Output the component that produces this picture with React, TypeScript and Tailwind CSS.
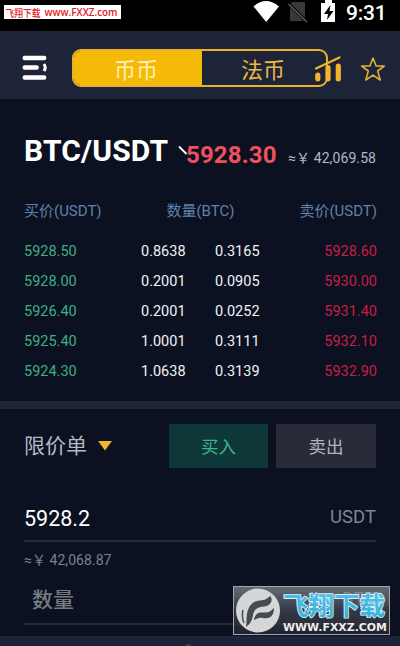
const bids = [
  { price: "5928.50", amount: "0.8638" },
  { price: "5928.00", amount: "0.2001" },
  { price: "5926.40", amount: "0.2001" },
  { price: "5925.40", amount: "1.0001" },
  { price: "5924.30", amount: "1.0638" },
];

const asks = [
  { price: "5928.60", amount: "0.3165" },
  { price: "5930.00", amount: "0.0905" },
  { price: "5931.40", amount: "0.0252" },
  { price: "5932.10", amount: "0.3111" },
  { price: "5932.90", amount: "0.3139" },
];

export default function App() {
  return (
    <div className="relative flex h-[646px] w-[400px] flex-col overflow-hidden bg-[#0b1120] font-['Roboto','Noto_Sans_CJK_SC',sans-serif] whitespace-nowrap text-white">
      <StatusBar />
      <Header />
      <Ticker />
      <OrderBook />
      <div className="h-2 shrink-0 bg-[#1f2636]" />
      <OrderForm />
      <div className="flex h-[10px] shrink-0 justify-center overflow-hidden bg-[#1d2338] pt-2">
        <div className="-ml-6 h-2 w-[7px] rounded-t-full bg-[#4a3d2a]" />
      </div>
      <Watermark />
    </div>
  );
}

function StatusBar() {
  return (
    <div className="flex h-[31px] shrink-0 justify-between bg-black">
      <div className="mt-[5px] ml-1 flex h-[14px] w-[117px] items-center justify-center bg-white font-['Open_Sans','Noto_Sans_CJK_SC',sans-serif] text-[10px] leading-[14px] font-semibold text-[#e0201c]">
        <svg width="115" height="14" viewBox="0 0 115 14" fill="currentColor">
          <text x="0.5" y="11.5" fontWeight="500" textLength="35" lengthAdjust="spacingAndGlyphs">飞翔下载</text>
          <text x="39.5" y="11" textLength="73" lengthAdjust="spacingAndGlyphs">www.FXXZ.com</text>
        </svg>
      </div>
      <div className="flex pr-[14px]">
        <svg width="94" height="31" viewBox="0 0 94 31">
          <path d="M0.5 6.5Q13-4.5 26 6.5L13.2 22Z" fill="#fff" />
          <path d="M39 2h13v19H37V5z" fill="#383838" />
          <path d="M35.5 3.5 54 22" stroke="#000" strokeWidth="3" />
          <path d="M35.5 4 54 22" stroke="#5c5c5c" strokeWidth="1.5" />
          <path d="M68 3h4V0h7v3h3v19H68z" fill="#fff" />
          <path d="M77.5 5 71 14h4l-1 6 6.5-9h-4z" fill="#000" />
        </svg>
        <span className="-ml-[1px] w-[40px] text-[21px] leading-[26px] font-medium tracking-[-0.2px]">9:31</span>
      </div>
    </div>
  );
}

function Header() {
  return (
    <div className="flex h-[68px] shrink-0 items-start bg-[#1e2437] pl-[22px]">
      <svg className="mt-[23px]" width="26" height="28" viewBox="0 0 26 28" fill="none" stroke="#fff" strokeWidth="4.4" strokeLinecap="round">
        <path d="M2.7 4h19.5M2.7 13.5h12M2.7 23.5h19.5" />
        <path d="M22 10q2.4 3.5 0 7" strokeWidth="3" strokeLinecap="butt" />
      </svg>
      <div className="mt-[18px] ml-6 flex h-[38px] w-[256px] shrink-0 overflow-hidden rounded-[9px] border-2 border-[#eab22c] text-[22px] leading-[40px]">
        <div className="w-[128px] bg-[#f5b907] pr-1 text-center text-[#fff0b4]">币币</div>
        <div className="flex-1 pr-[2px] text-center text-[#eab845]">法币</div>
      </div>
      <svg className="mt-[24px] -ml-[14px] shrink-0" width="28" height="28" viewBox="0 0 28 28" fill="none" stroke="#f0b52c" strokeLinecap="round">
        <path d="M3.8 20v3.8M14 12.5v11.3M24.3 11v12.8" strokeWidth="5.2" />
        <path d="M2 13.5 25.5 2.5" strokeWidth="2.2" />
      </svg>
      <svg className="mt-[25px] ml-[18px] shrink-0" width="26" height="26" viewBox="0 0 26 26" fill="none" stroke="#e3ad38" strokeWidth="1.6" strokeLinejoin="round">
        <path d="m13 2 3.1 8h8.2l-6.6 5 2.5 9L13 19.1l-7.2 4.9L8.3 15l-6.6-5h8.2z" />
      </svg>
    </div>
  );
}

function Ticker() {
  return (
    <div className="flex h-[93px] shrink-0 items-start pt-[32px] pl-6">
      <h1 className="w-[144px] text-[30px] leading-[40px] font-bold tracking-[0.15px]">BTC/USDT</h1>
      <svg className="mt-[14px] ml-[10px]" width="16" height="12" viewBox="0 0 16 12" fill="none" stroke="#fff" strokeWidth="1.8">
        <path d="m1 1.5 7.5 7.5" />
      </svg>
      <span className="mt-1 -ml-2 w-[92px] text-[24px] leading-[40px] font-bold tracking-[0.15px] text-[#f0505c]">5928.30</span>
      <span className="mt-[7px] ml-[10px] text-[14px] leading-[40px] tracking-[0.1px] text-[#b4b9c2]">≈￥ 42,069.58</span>
    </div>
  );
}

function OrderBook() {
  return (
    <div className="h-[209px] shrink-0 pr-[23px] pl-6">
      <div className="flex h-[45px] justify-between text-[15px] leading-[38px] text-[#5f82aa]">
        <span>买价(USDT)</span>
        <span>数量(BTC)</span>
        <span>卖价(USDT)</span>
      </div>
      {bids.map((bid, i) => (
        <div key={bid.price} className="flex h-[30px] text-[14.5px] leading-[30px]">
          <span className="w-[117px] text-[#3fae83]">{bid.price}</span>
          <span className="w-[74px] text-[#f1f3f7]">{bid.amount}</span>
          <span className="flex-1 text-[#f1f3f7]">{asks[i].amount}</span>
          <span className="text-[#c81e45]">{asks[i].price}</span>
        </div>
      ))}
    </div>
  );
}

function OrderForm() {
  return (
    <div className="flex h-[227px] shrink-0 flex-col px-6 pt-[15px]">
      <div className="flex h-11 items-center text-[17.5px]">
        <span className="text-[21px] leading-[46px] text-[#b4b8c0]">限价单</span>
        <svg className="ml-[11px]" width="14" height="10" viewBox="0 0 14 10">
          <path d="M0 0h14L7 9.5z" fill="#f0b52c" />
        </svg>
        <div className="ml-auto h-11 w-[99px] bg-[#0d3837] text-center leading-[46px] text-[#3fb58c]">买入</div>
        <div className="ml-2 h-11 w-[100px] bg-[#292b39] text-center leading-[46px] text-[#b4b4bb]">卖出</div>
      </div>
      <div className="flex h-[74px] items-end justify-between border-b-2 border-[#252b3b]">
        <span className="text-[21.5px] leading-[42px]">5928.2</span>
        <span className="text-[18.5px] leading-[46px] text-[#81858f]">USDT</span>
      </div>
      <div className="h-[37px] text-[14px] leading-[36px] tracking-[0.05px] text-[#7c818d]">≈￥ 42,068.87</div>
      <div className="flex h-[46px] justify-between border-b-2 border-[#252b3b] pl-2 text-[#777b84]">
        <span className="text-[21px] leading-[42px] font-medium">数量</span>
        <span className="text-[18.5px] leading-[40px]">BTC</span>
      </div>
    </div>
  );
}

function Watermark() {
  return (
    <svg className="absolute top-[586px] left-[233px]" width="157" height="49" viewBox="0 0 157 49">
      <defs>
        <linearGradient id="panel" x1="0" y1="0" x2="0" y2="1">
          <stop offset="0" stopColor="#a0a4ac" stopOpacity="0.6" />
          <stop offset="0.5" stopColor="#454954" stopOpacity="0.7" />
          <stop offset="1" stopColor="#20242e" stopOpacity="0.9" />
        </linearGradient>
        <linearGradient id="cyan" x1="0" y1="0" x2="0" y2="1">
          <stop offset="0" stopColor="#5cc4ee" />
          <stop offset="1" stopColor="#35acd5" />
        </linearGradient>
      </defs>
      <rect x="0.5" y="0.5" width="156" height="48" fill="url(#panel)" stroke="#a1a5ad" />
      <circle cx="25" cy="24.5" r="22" fill="#d5d6d8" />
      <path d="M13 41C14 34 13 29 15 24C17 18 21 15 27 14.5C32 14 34 13 37 10C41 14 37 20 31 20.5C25 21 21 23 20 29C19 35 17 38 13 41Z" fill="#464a53" />
      <path d="M21 34C22 27 26 26 31 26.5C36 27 38 25 41 22C41 31 36 33 30 32C26 31 24 33 21 34Z" fill="#464a53" />
      <path d="M11 37C9 32 9 28 10 24" fill="none" stroke="#464a53" strokeWidth="1.5" />
      <text
        x="50"
        y="29"
        fontSize="25.5"
        fontWeight="700"
        fontFamily="Noto Sans CJK SC, sans-serif"
        textLength="102"
        lengthAdjust="spacingAndGlyphs"
        fill="url(#cyan)"
        stroke="#d5f1fc"
        strokeWidth="1.8"
        strokeLinejoin="round"
        paintOrder="stroke"
      >
        飞翔下载
      </text>
      <text
        x="50"
        y="45"
        fontSize="10"
        fontWeight="700"
        fontFamily="DejaVu Sans, sans-serif"
        textLength="104"
        lengthAdjust="spacingAndGlyphs"
        fill="#eceded"
      >
        WWW.FXXZ.COM
      </text>
    </svg>
  );
}
